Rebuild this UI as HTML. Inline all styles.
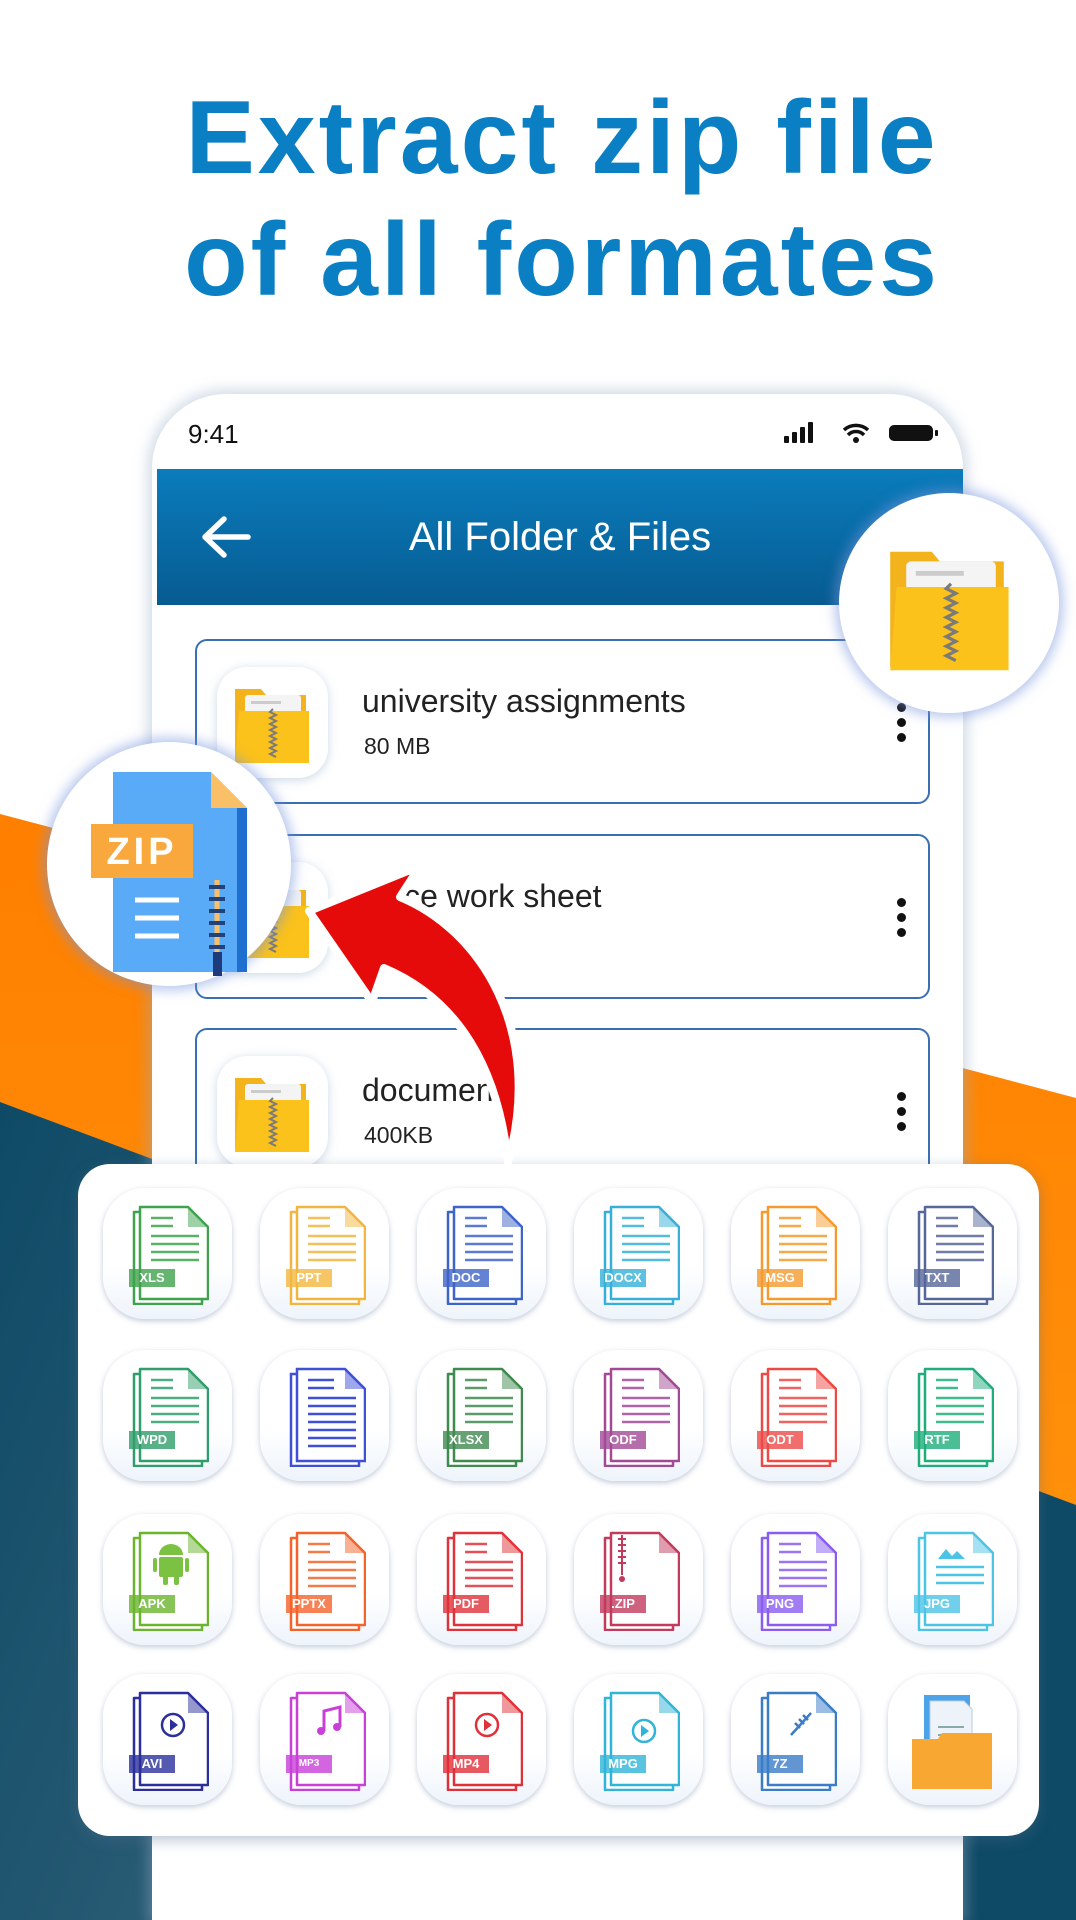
<!DOCTYPE html>
<html><head><meta charset="utf-8">
<style>
*{margin:0;padding:0;box-sizing:border-box}
html{width:1076px;height:1920px;overflow:hidden;background:#0e4a66}
body{width:1076px;height:1920px;position:relative;overflow:hidden;background:#fff;font-family:"Liberation Sans",sans-serif}
.abs{position:absolute}
h1{position:absolute;left:24px;width:1076px;text-align:center;color:#0a7fc4;font-weight:700;font-size:104px;letter-spacing:3px;line-height:1}
.phone{left:152px;top:394px;width:811px;height:1526px;background:#fff;border-radius:74px 74px 0 0;box-shadow:0 0 14px 4px rgba(150,175,200,.45)}
.hdr{left:157px;top:469px;width:806px;height:136px;background:linear-gradient(#0a7cbc,#075b91)}
.card{left:195px;width:735px;height:165px;border:2px solid #3b6fb3;border-radius:12px;background:#fff}
.fic{position:absolute;left:20px;top:26px;width:111px;height:111px;border-radius:30px;background:#fff;box-shadow:0 2px 10px rgba(140,170,200,.45)}
.ct{position:absolute;left:165px;top:42px;font-size:32px;color:#222}
.cs{position:absolute;left:167px;top:92px;font-size:23px;color:#222}
.dots{position:absolute;left:700px;top:62px;width:10px}
.dots i{display:block;width:9px;height:9px;border-radius:50%;background:#111;margin-bottom:6px}
.circ{border-radius:50%;background:#fff;box-shadow:0 0 12px 4px rgba(120,150,220,.55)}
.panel{left:78px;top:1164px;width:961px;height:672px;border-radius:32px;background:#fff;box-shadow:0 4px 14px rgba(80,110,140,.4)}
.cell{position:absolute;width:129px;height:131px;border-radius:42px;background:linear-gradient(#fff 60%,#eef4fb);box-shadow:0 2px 6px rgba(120,140,170,.45)}
.cell svg{position:absolute;left:26px;top:17px}
.lab{position:absolute;left:26px;top:81px;width:46px;height:18px;color:#fff;font-size:13px;font-weight:700;text-align:center;line-height:18px}
</style></head><body>
<svg class="abs" style="left:0;top:0" width="1076" height="1920">
<defs><linearGradient id="dk" x1="0" y1="0" x2="1" y2="0.3"><stop offset="0" stop-color="#0e4a66"/><stop offset=".5" stop-color="#2f5f77"/><stop offset="1" stop-color="#0e4a66"/></linearGradient>
<linearGradient id="or" x1="0" y1="0" x2="0" y2="1"><stop offset="0" stop-color="#ff7f00"/><stop offset="1" stop-color="#ff9a10"/></linearGradient></defs>
<polygon points="0,814 1076,1098 1076,1920 0,1920" fill="url(#or)"/>
<polygon points="0,1102 1076,1505 1076,1920 0,1920" fill="url(#dk)"/>
</svg>
<h1 style="top:86px">Extract zip file</h1>
<h1 style="top:208px">of all formates</h1>

<div class="abs phone"></div>
<div class="abs" style="left:188px;top:419px;font-size:26px;color:#111">9:41</div>
<svg class="abs" style="left:782px;top:420px" width="160" height="26">
<rect x="2" y="16" width="5" height="7" rx="1" fill="#111"/><rect x="10" y="12" width="5" height="11" rx="1" fill="#111"/><rect x="18" y="7" width="5" height="16" rx="1" fill="#111"/><rect x="26" y="2" width="5" height="21" rx="1" fill="#111"/>
<path d="M62 10 a18 18 0 0 1 24 0" stroke="#111" stroke-width="3.5" fill="none"/><path d="M66 15 a11 11 0 0 1 16 0" stroke="#111" stroke-width="3.5" fill="none"/><circle cx="74" cy="20" r="3" fill="#111"/>
<rect x="107" y="5" width="44" height="16" rx="5" fill="#111"/><rect x="153" y="10" width="3" height="6" rx="1" fill="#111"/>
</svg>
<div class="abs hdr"></div>
<svg class="abs" style="left:200px;top:515px" width="52" height="44"><path d="M48 22H6M24 4L5 22l19 18" stroke="#fff" stroke-width="5.5" fill="none" stroke-linecap="round" stroke-linejoin="round"/></svg>
<div class="abs" style="left:157px;width:806px;top:515px;text-align:center;color:#fff;font-size:40px">All Folder &amp; Files</div>

<svg width="0" height="0" style="position:absolute">
<defs>
<g id="fold"><path d="M2 8 h26 l5 6 h40 v66 h-71z" fill="#f3b31d"/><rect x="12" y="14" width="56" height="24" rx="3" fill="#f4f4f4"/><rect x="18" y="20" width="30" height="3" fill="#ccc"/><path d="M6 30 h70 v52 h-74z" fill="#fbc21b"/><path d="M40 28 l-3 3 l6 3 l-6 3 l6 3 l-6 3 l6 3 l-6 3 l6 3 l-6 3 l6 3 l-6 3 l6 3 l-6 3 l6 3 l-6 3 l6 3" stroke="#7a7a7a" stroke-width="2" fill="none"/></g>
<g id="doc"><path d="M5 7h48l20 20v72H5z" fill="#fff" stroke="currentColor" stroke-width="2.5" stroke-linejoin="round"/><path d="M11 2h48l20 20v72H11z" fill="#fff" stroke="currentColor" stroke-width="2.5" stroke-linejoin="round"/><path d="M59 2v20h20z" fill="currentColor" opacity=".5"/><g stroke="currentColor" stroke-width="2.5" opacity=".85"><path d="M22 13h22M22 21h22M22 31h48M22 39h48M22 47h48M22 55h48"/></g><rect x="0" y="64" width="46" height="18" fill="currentColor" opacity=".8"/></g>
<g id="doc2"><path d="M5 7h48l20 20v72H5z" fill="#fff" stroke="currentColor" stroke-width="2.5" stroke-linejoin="round"/><path d="M11 2h48l20 20v72H11z" fill="#fff" stroke="currentColor" stroke-width="2.5" stroke-linejoin="round"/><path d="M59 2v20h20z" fill="currentColor" opacity=".5"/><rect x="0" y="64" width="46" height="18" fill="currentColor" opacity=".8"/></g>
</defs></svg>

<div class="abs card" style="top:639px"><div class="fic"><svg width="111" height="111"><use href="#fold" x="16" y="14"/></svg></div><div class="ct">university assignments</div><div class="cs">80 MB</div><div class="dots"><i></i><i></i><i></i></div></div>
<div class="abs card" style="top:834px"><div class="fic"><svg width="111" height="111"><use href="#fold" x="16" y="14"/></svg></div><div class="ct">office work sheet</div><div class="dots"><i></i><i></i><i></i></div></div>
<div class="abs card" style="top:1028px"><div class="fic"><svg width="111" height="111"><use href="#fold" x="16" y="14"/></svg></div><div class="ct">documents</div><div class="cs">400KB</div><div class="dots"><i></i><i></i><i></i></div></div>

<div class="abs circ" style="left:839px;top:493px;width:220px;height:220px"><svg width="220" height="220"><use href="#fold" transform="translate(48,46) scale(1.6)"/></svg></div>

<div class="abs panel">
<div class="cell" style="left:25px;top:24px;color:#3fa34d"><svg width="80" height="100"><use href="#doc"/></svg><div class="lab">XLS</div></div>
<div class="cell" style="left:182px;top:24px;color:#f2b640"><svg width="80" height="100"><use href="#doc"/></svg><div class="lab">PPT</div></div>
<div class="cell" style="left:339px;top:24px;color:#3f64c8"><svg width="80" height="100"><use href="#doc"/></svg><div class="lab">DOC</div></div>
<div class="cell" style="left:496px;top:24px;color:#36b0d8"><svg width="80" height="100"><use href="#doc"/></svg><div class="lab">DOCX</div></div>
<div class="cell" style="left:653px;top:24px;color:#f59a2e"><svg width="80" height="100"><use href="#doc"/></svg><div class="lab">MSG</div></div>
<div class="cell" style="left:810px;top:24px;color:#56679a"><svg width="80" height="100"><use href="#doc"/></svg><div class="lab">TXT</div></div>

<div class="cell" style="left:25px;top:186px;color:#2f9e6a"><svg width="80" height="100"><use href="#doc"/></svg><div class="lab">WPD</div></div>
<div class="cell" style="left:182px;top:186px;color:#3e4fd8"><svg width="80" height="100"><g fill="#fff" stroke="currentColor" stroke-width="2.5"><path d="M5 7h48l20 20v72H5z"/><path d="M11 2h48l20 20v72H11z"/></g><path d="M59 2v20h20z" fill="currentColor" opacity=".5"/><g stroke="currentColor" stroke-width="2.5"><path d="M22 13h26M22 21h26M22 31h48M22 39h48M22 47h48M22 55h48M22 63h48M22 71h48M22 79h48"/></g></svg></div>
<div class="cell" style="left:339px;top:186px;color:#3f8a4f"><svg width="80" height="100"><use href="#doc"/></svg><div class="lab">XLSX</div></div>
<div class="cell" style="left:496px;top:186px;color:#a34a96"><svg width="80" height="100"><use href="#doc"/></svg><div class="lab">ODF</div></div>
<div class="cell" style="left:653px;top:186px;color:#ec4a46"><svg width="80" height="100"><use href="#doc"/></svg><div class="lab">ODT</div></div>
<div class="cell" style="left:810px;top:186px;color:#1fae7a"><svg width="80" height="100"><use href="#doc"/></svg><div class="lab">RTF</div></div>

<div class="cell" style="left:25px;top:350px;color:#6ab42e"><svg width="80" height="100"><use href="#doc2"/><g fill="#7cc242"><rect x="30" y="26" width="24" height="20" rx="2"/><path d="M30 24a12 11 0 0 1 24 0z"/><rect x="24" y="27" width="4" height="14" rx="2"/><rect x="56" y="27" width="4" height="14" rx="2"/><rect x="34" y="44" width="5" height="10" rx="2"/><rect x="45" y="44" width="5" height="10" rx="2"/></g></svg><div class="lab">APK</div></div>
<div class="cell" style="left:182px;top:350px;color:#f4632a"><svg width="80" height="100"><use href="#doc"/></svg><div class="lab">PPTX</div></div>
<div class="cell" style="left:339px;top:350px;color:#e0323a"><svg width="80" height="100"><use href="#doc"/></svg><div class="lab">PDF</div></div>
<div class="cell" style="left:496px;top:350px;color:#c23a5c"><svg width="80" height="100"><use href="#doc2"/><path d="M22 4v40M18 8h8M18 14h8M18 20h8M18 26h8M18 32h8" stroke="currentColor" stroke-width="2"/><circle cx="22" cy="48" r="3" fill="currentColor"/></svg><div class="lab">.ZIP</div></div>
<div class="cell" style="left:653px;top:350px;color:#8a5cf0"><svg width="80" height="100"><use href="#doc"/></svg><div class="lab">PNG</div></div>
<div class="cell" style="left:810px;top:350px;color:#4cc4e6"><svg width="80" height="100"><use href="#doc2"/><path d="M24 28l8-10 6 7 5-5 8 8z" fill="currentColor"/><path d="M22 36h48M22 44h48M22 52h48" stroke="currentColor" stroke-width="2.5"/></svg><div class="lab">JPG</div></div>

<div class="cell" style="left:25px;top:510px;color:#2b2f9c"><svg width="80" height="100"><use href="#doc2"/><circle cx="44" cy="34" r="11" fill="none" stroke="currentColor" stroke-width="2.5"/><path d="M41 28l8 6-8 6z" fill="currentColor"/></svg><div class="lab">AVI</div></div>
<div class="cell" style="left:182px;top:510px;color:#c840d8"><svg width="80" height="100"><use href="#doc2"/><path d="M38 40V20l16-4v20" stroke="currentColor" stroke-width="3" fill="none"/><circle cx="35" cy="40" r="4" fill="currentColor"/><circle cx="51" cy="36" r="4" fill="currentColor"/></svg><div class="lab" style="font-size:10px">MP3</div></div>
<div class="cell" style="left:339px;top:510px;color:#e03038"><svg width="80" height="100"><use href="#doc2"/><circle cx="44" cy="34" r="11" fill="none" stroke="currentColor" stroke-width="2.5"/><path d="M41 28l8 6-8 6z" fill="currentColor"/></svg><div class="lab">MP4</div></div>
<div class="cell" style="left:496px;top:510px;color:#30b4d8"><svg width="80" height="100"><use href="#doc2"/><circle cx="44" cy="40" r="11" fill="none" stroke="currentColor" stroke-width="2.5"/><path d="M41 34l8 6-8 6z" fill="currentColor"/></svg><div class="lab">MPG</div></div>
<div class="cell" style="left:653px;top:510px;color:#3a7cc8"><svg width="80" height="100"><use href="#doc2"/><path d="M34 44l20-22M38 32l5 5M42 28l5 5M46 24l5 5" stroke="currentColor" stroke-width="2.5"/></svg><div class="lab">7Z</div></div>
<div class="cell" style="left:810px;top:510px"><svg width="84" height="100" style="left:22px"><rect x="14" y="4" width="46" height="60" fill="#4da3e8"/><path d="M20 10h34l8 8v50H20z" fill="#eef3fa" stroke="#bcd" stroke-width="1"/><path d="M28 36h26M28 44h26" stroke="#8aa" stroke-width="2"/><path d="M2 48h26l4 -6h50v56H2z" fill="#f8a832"/></svg></div>
</div>

<div class="abs circ" style="left:47px;top:742px;width:244px;height:244px"><svg width="244" height="244">
<path d="M66 30h98l36 36v164H66z" fill="#5aabf7"/>
<path d="M200 66v164h-10V66z" fill="#1e6fd0"/>
<path d="M164 30v36h36z" fill="#f9c068"/>
<rect x="44" y="82" width="102" height="54" fill="#f9a83d"/>
<text x="95" y="122" text-anchor="middle" font-family="Liberation Sans" font-weight="700" font-size="38" fill="#fff" letter-spacing="4">ZIP</text>
<path d="M88 158h44M88 176h44M88 194h44" stroke="#fff" stroke-width="5"/>
<path d="M170 138v90" stroke="#f9c068" stroke-width="5"/><path d="M162 145h16M162 157h16M162 169h16M162 181h16M162 193h16M162 205h16" stroke="#24427a" stroke-width="4"/>
<rect x="166" y="210" width="9" height="24" fill="#1e3a7a"/>
</svg></div>

<svg class="abs" style="left:0;top:0" width="1076" height="1300">
<path d="M309 911 L420 866 L400 897 C480 930 545 1030 508 1162 C498 1070 460 1000 384 968 L372 1002 Z" fill="#e60b0b" stroke="#fff" stroke-width="8" stroke-linejoin="round"/>
</svg>
</body></html>
